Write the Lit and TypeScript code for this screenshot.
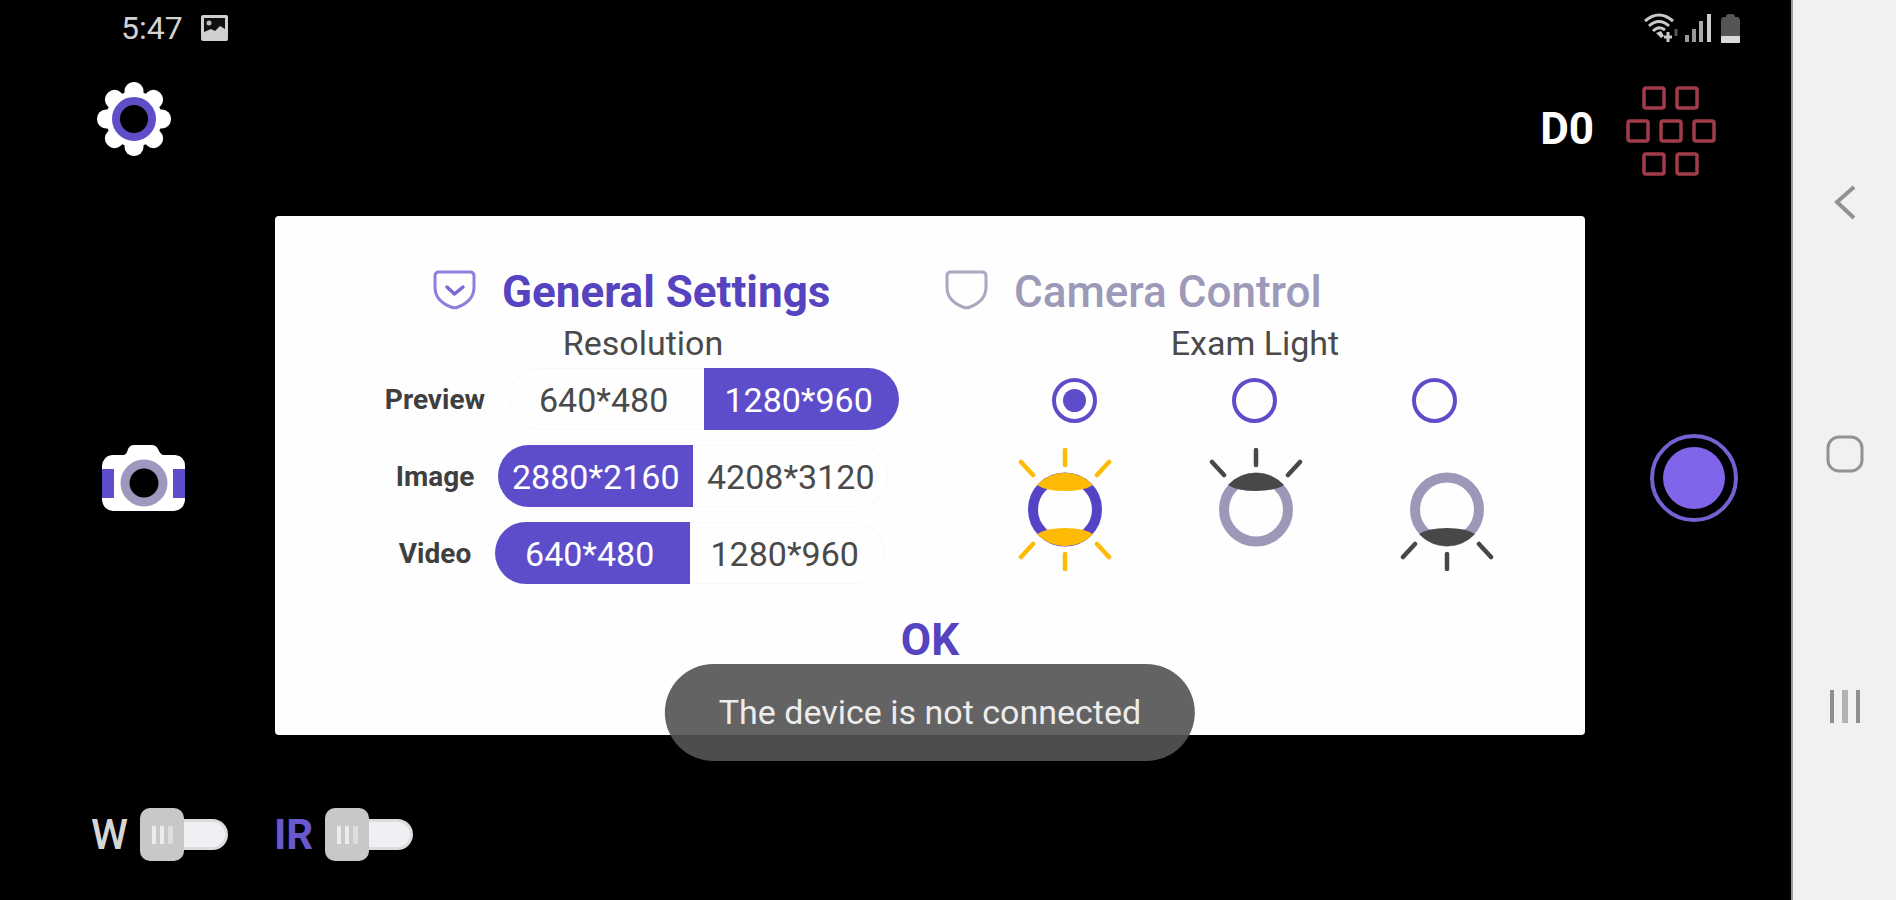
import { LitElement, html, css, svg } from "lit";
import { customElement, state } from "lit/decorators.js";
import { classMap } from "lit/directives/class-map.js";

interface ResolutionRow {
  id: string;
  label: string;
  options: string[];
  selected: number;
}

type Lamp = "both" | "top" | "bottom";

@customElement("app-root")
export class AppRoot extends LitElement {
  @state() private rows: ResolutionRow[] = [
    { id: "preview", label: "Preview", options: ["640*480", "1280*960"], selected: 1 },
    { id: "image", label: "Image", options: ["2880*2160", "4208*3120"], selected: 0 },
    { id: "video", label: "Video", options: ["640*480", "1280*960"], selected: 0 },
  ];
  @state() private light: Lamp = "both";
  @state() private tab = 0;

  static styles = css`
    :host {
      display: flex;
      min-height: 100vh;
      background: #000;
      font-family: Roboto, "Liberation Sans", sans-serif;
      color: #4a4a4a;
    }
    *,
    *::before,
    *::after {
      box-sizing: border-box;
    }
    svg {
      display: block;
      flex: none;
    }
    button {
      margin: 0;
      padding: 0;
      border: 0;
      background: none;
      font: inherit;
      color: inherit;
      cursor: pointer;
    }
    .stage {
      flex: 1;
      min-width: 0;
      display: grid;
      grid-template-columns: 275px 1fr 206px;
      grid-template-rows: 56px 160px 1fr 165px;
    }
    .status {
      grid-column: 1 / -1;
      display: flex;
      justify-content: space-between;
      align-items: center;
      padding: 0 47px 0 121px;
      font-size: 32px;
      line-height: 40px;
      color: #d2d2d2;
    }
    .status-group {
      display: flex;
      align-items: center;
      gap: 18px;
    }
    .status-icons {
      gap: 5px;
    }
    .top {
      grid-column: 1 / -1;
      display: flex;
      justify-content: space-between;
      align-items: flex-start;
      padding: 26px 75px 0 97px;
    }
    .detector {
      display: flex;
      align-items: flex-start;
      gap: 32px;
      padding-top: 4px;
      font-size: 44px;
      line-height: 86px;
      font-weight: 700;
      color: #fff;
    }
    .side {
      display: flex;
      align-items: center;
      padding-top: 4px;
    }
    .side-left {
      padding-left: 102px;
    }
    .side-right {
      padding-left: 64px;
    }
    .bottom {
      grid-column: 1 / -1;
      display: flex;
      align-items: flex-start;
      gap: 46px;
      padding: 73px 0 0 91px;
    }
    .switch {
      display: flex;
      align-items: center;
      gap: 12px;
      font-size: 42px;
      line-height: 52px;
      font-weight: 500;
      color: #d6d6d6;
    }
    .switch.violet {
      font-weight: 700;
      color: #6a58cf;
    }
    .switch input {
      appearance: none;
      display: flex;
      align-items: center;
      margin: 0;
      cursor: pointer;
    }
    .switch input::before {
      content: "";
      width: 44px;
      height: 53px;
      border-radius: 10px;
      background:
        linear-gradient(#ececec, #ececec) 12px 18px / 4px 18px no-repeat,
        linear-gradient(#ececec, #ececec) 20px 18px / 4px 18px no-repeat,
        linear-gradient(#dedede, #dedede) 28px 18px / 5px 18px no-repeat,
        #c8c8c8;
    }
    .switch input::after {
      content: "";
      width: 44px;
      height: 31px;
      border-radius: 0 16px 16px 0;
      border: 3px solid #dcdcdc;
      border-left: 0;
      background: #f0eff3;
    }
    .dialog {
      position: relative;
      display: flex;
      flex-direction: column;
      padding: 49px 0 64px;
      border-radius: 4px;
      background: #fefefe;
    }
    .tabs {
      display: grid;
      grid-template-columns: 512px auto;
      justify-content: start;
      padding-left: 158px;
    }
    .tab {
      display: flex;
      align-items: center;
      gap: 25px;
      font-size: 44px;
      line-height: 54px;
      font-weight: 500;
      white-space: nowrap;
      color: #9c99b9;
    }
    .tab.active {
      font-weight: 700;
      color: #5543c0;
    }
    .tab svg {
      margin-bottom: 4px;
    }
    .columns {
      display: grid;
      grid-template-columns: 1fr 1fr;
      padding: 0 25px 0 61px;
    }
    .title {
      margin: 0;
      padding-left: 2px;
      font-size: 34px;
      line-height: 49px;
      font-weight: 400;
      text-align: center;
    }
    .rows {
      display: grid;
      gap: 15px;
    }
    .row {
      display: flex;
      justify-content: center;
      align-items: center;
      gap: 24px;
    }
    .row-label {
      padding-top: 2px;
      font-size: 28px;
      line-height: 34px;
      font-weight: 700;
      color: #3f3f3f;
    }
    .segments {
      display: grid;
      grid-template-columns: 195px 195px;
      height: 62px;
      border-radius: 31px;
      box-shadow: inset 0 0 0 1px #f8f8f8;
      overflow: hidden;
    }
    .segment {
      position: relative;
      display: flex;
      align-items: center;
      justify-content: center;
      padding-top: 2px;
      font-size: 34px;
      line-height: 40px;
      cursor: pointer;
    }
    .segment.short {
      padding-right: 6px;
    }
    .segment.on {
      background: #5d4dcb;
      color: #fff;
    }
    .segment input {
      position: absolute;
      inset: 0;
      margin: 0;
      opacity: 0;
      cursor: pointer;
    }
    .radios {
      display: grid;
      grid-template-columns: repeat(3, 180px);
      justify-content: center;
      justify-items: center;
      align-items: center;
      height: 64px;
    }
    .radios input {
      appearance: none;
      display: grid;
      place-items: center;
      width: 45px;
      height: 45px;
      margin: 0;
      border: 4px solid #5d4dc8;
      border-radius: 50%;
      cursor: pointer;
    }
    .radios input:checked::before {
      content: "";
      width: 23px;
      height: 23px;
      border-radius: 50%;
      background: #5d4dcb;
    }
    .lamps {
      display: grid;
      grid-template-columns: repeat(3, 191px);
      justify-content: center;
      justify-items: center;
      padding: 16px 0 0 4px;
    }
    .ok {
      align-self: center;
      margin-top: 26px;
      font-size: 44px;
      line-height: 60px;
      font-weight: 700;
      color: #5543c0;
    }
    .toast {
      position: absolute;
      left: 50%;
      bottom: -26px;
      transform: translateX(-50%);
      padding: 0 54px;
      border-radius: 49px;
      background: rgba(84, 84, 84, 0.914);
      font-size: 34px;
      line-height: 97px;
      white-space: nowrap;
      color: #ececec;
    }
    .nav {
      flex: none;
      width: 105px;
      display: flex;
      flex-direction: column;
      align-items: center;
      justify-content: space-between;
      padding: 180px 0 172px;
      border-left: 2px solid #9a9a9a;
      background: #f1f1f1;
    }
    .nav button {
      padding: 4px;
    }
  `;

  private select(row: ResolutionRow, index: number) {
    this.rows = this.rows.map((r) => (r === row ? { ...r, selected: index } : r));
  }

  private shield(active: boolean) {
    return html`<svg width="44" height="40" viewBox="0 0 44 40" fill="none" stroke-linejoin="round" aria-hidden="true">
      <path
        d="M6 2H37Q41 2 41 6V17C41 28 33 34 25 37Q21.500 38.500 18 37C10 34 2 28 2 17V6Q2 2 6 2Z"
        stroke=${active ? "#8f7fdc" : "#aaa7c0"}
        stroke-width="3"
      />
      ${active ? svg`<path d="M14 17L21.500 24L30 17" stroke="#7a68d4" stroke-width="3.500" stroke-linecap="round"/>` : ""}
    </svg>`;
  }

  private lamp(kind: Lamp) {
    const lit = kind === "both";
    const tint = lit ? "#fdbb05" : "#484848";
    const cap = svg`
      <path d="M19 37A38 38 0 0 1 75 37Q66 43 47 43T19 37Z" fill=${tint}/>
      <path d="M47 2V17M3 14L15 27M91 14L79 27" stroke=${tint} stroke-width="4.500" stroke-linecap="round"/>`;
    return html`<svg width="94" height="123" viewBox="0 0 94 123" fill="none" aria-hidden="true">
      <circle cx="47" cy="61.500" r="32" stroke=${lit ? "#5543c6" : "#9b99b7"} stroke-width="10" />
      ${kind !== "bottom" ? cap : ""}
      ${kind !== "top" ? svg`<g transform="matrix(1 0 0 -1 0 123)">${cap}</g>` : ""}
    </svg>`;
  }

  private gear() {
    const teeth = [0, 45, 90, 135, 180, 225, 270, 315];
    return html`<svg width="74" height="74" viewBox="0 0 74 74" aria-hidden="true">
      <circle cx="37" cy="37" r="28" fill="#fff" />
      ${teeth.map((a) => svg`<rect x="27.500" y="0" width="19" height="22" rx="9" fill="#fff" transform="rotate(${a} 37 37)"/>`)}
      <circle cx="37" cy="37" r="18" fill="#000" stroke="#5f4fc6" stroke-width="8" />
    </svg>`;
  }

  private detectorGrid() {
    const cells = [
      [18, 2], [51, 2],
      [2, 35], [35, 35], [68, 35],
      [18, 68], [51, 68],
    ];
    return html`<svg width="90" height="90" viewBox="0 0 90 90" fill="none" aria-hidden="true">
      ${cells.map(([x, y]) => svg`<rect x=${x} y=${y} width="20" height="20" rx="2" stroke="#a33c4a" stroke-width="3.500"/>`)}
    </svg>`;
  }

  private renderStatus() {
    return html`<header class="status">
      <div class="status-group">
        <span>5:47</span>
        <svg width="27" height="26" viewBox="0 0 27 26" aria-hidden="true">
          <rect width="27" height="26" rx="2" fill="#cfcfcf" />
          <path d="M3 3H24V14L19 11L14 16L10 14L3 17Z" fill="#111" />
          <circle cx="8" cy="8" r="2.500" fill="#bbb" />
        </svg>
      </div>
      <div class="status-group status-icons">
        <svg width="37" height="30" viewBox="0 0 37 30" fill="none" stroke="#c9c9c9" aria-hidden="true">
          <path d="M2 8Q16 -4 30 8" stroke-width="3" />
          <path d="M6 13Q16 4 26 13" stroke-width="3" />
          <path d="M10 18Q16 12 22 17" stroke-width="3" />
          <path d="M13 20L18 18L21 23L18 25Z" fill="#c9c9c9" stroke="none" />
          <path d="M25 19V29M21 24H29" stroke-width="3" />
          <path d="M33 16V23" stroke="#555" stroke-width="3" />
        </svg>
        <svg width="27" height="28" viewBox="0 0 27 28" aria-hidden="true">
          <rect x="0" y="21" width="4" height="7" fill="#999" />
          <rect x="7" y="15" width="4" height="13" fill="#999" />
          <rect x="14" y="7" width="4" height="21" fill="#aaa" />
          <rect x="22" y="0" width="4" height="28" fill="#ccc" />
        </svg>
        <svg width="27" height="29" viewBox="0 0 27 29" aria-hidden="true">
          <path d="M9 3Q9 0 12 0H15Q18 0 18 3H20Q23 3 23 7V29H4V7Q4 3 7 3Z" fill="#555" />
          <rect x="4" y="22" width="19" height="7" rx="1" fill="#dadada" />
        </svg>
      </div>
    </header>`;
  }

  private renderRow(row: ResolutionRow) {
    return html`<div class="row" role="radiogroup" aria-labelledby="${row.id}-label">
      <span class="row-label" id="${row.id}-label">${row.label}</span>
      <div class="segments">
        ${row.options.map(
          (option, i) => html`<label
            class=${classMap({ segment: true, on: row.selected === i, short: option.length < 9 })}
          >
            <input type="radio" name=${row.id} .checked=${row.selected === i} @change=${() => this.select(row, i)} />
            <span>${option}</span>
          </label>`
        )}
      </div>
    </div>`;
  }

  private renderDialog() {
    const lamps: Lamp[] = ["both", "top", "bottom"];
    return html`<section class="dialog" role="dialog">
      <div class="tabs" role="tablist">
        ${["General Settings", "Camera Control"].map(
          (name, i) => html`<button
            class=${classMap({ tab: true, active: this.tab === i })}
            role="tab"
            aria-selected=${this.tab === i}
            @click=${() => (this.tab = i)}
          >
            ${this.shield(this.tab === i)}<span>${name}</span>
          </button>`
        )}
      </div>
      <div class="columns">
        <div>
          <h2 class="title">Resolution</h2>
          <div class="rows">${this.rows.map((row) => this.renderRow(row))}</div>
        </div>
        <div>
          <h2 class="title">Exam Light</h2>
          <div class="radios">
            ${lamps.map(
              (l) => html`<input
                type="radio"
                name="light"
                id="light-${l}"
                .checked=${this.light === l}
                @change=${() => (this.light = l)}
              />`
            )}
          </div>
          <div class="lamps">
            ${lamps.map((l) => html`<label for="light-${l}" aria-label=${l}>${this.lamp(l)}</label>`)}
          </div>
        </div>
      </div>
      <button class="ok">OK</button>
      <div class="toast" role="status">The device is not connected</div>
    </section>`;
  }

  render() {
    return html`
      <main class="stage">
        ${this.renderStatus()}
        <div class="top">
          <button aria-label="Settings">${this.gear()}</button>
          <div class="detector"><span>D0</span>${this.detectorGrid()}</div>
        </div>
        <div class="side side-left">
          <button aria-label="Take photo">
            <svg width="84" height="66" viewBox="0 0 84 66" aria-hidden="true">
              <path
                d="M10 10H22Q25 9 26 4Q28 0 32 0H50Q54 0 56 4Q58 9 61 10H73Q83 11 83 21V55Q82 65 72 66H11Q1 65 0 55V21Q1 11 10 10Z"
                fill="#fff"
              />
              <rect x="0" y="24" width="12" height="29" fill="#5d4dcb" />
              <rect x="71" y="24" width="12" height="29" fill="#5d4dcb" />
              <circle cx="42" cy="38" r="19" fill="#000" stroke="#9d98bd" stroke-width="9" />
            </svg>
          </button>
        </div>
        ${this.renderDialog()}
        <div class="side side-right">
          <button aria-label="Record">
            <svg width="90" height="90" viewBox="0 0 90 90" aria-hidden="true">
              <circle cx="45" cy="45" r="42" fill="none" stroke="#7660d2" stroke-width="4" />
              <circle cx="45" cy="45" r="31" fill="#8064ea" />
            </svg>
          </button>
        </div>
        <div class="bottom">
          <label class="switch">W<input type="checkbox" role="switch" /></label>
          <label class="switch violet">IR<input type="checkbox" role="switch" /></label>
        </div>
      </main>
      <nav class="nav">
        <button aria-label="Back">
          <svg width="36" height="36" viewBox="0 0 36 36" fill="none" aria-hidden="true">
            <path d="M27 3L10 18L27 34" stroke="#929292" stroke-width="4" />
          </svg>
        </button>
        <button aria-label="Home">
          <svg width="38" height="38" viewBox="0 0 38 38" fill="none" aria-hidden="true">
            <rect x="2" y="2" width="34" height="34" rx="11" stroke="#929292" stroke-width="3" />
          </svg>
        </button>
        <button aria-label="Recent apps">
          <svg width="36" height="36" viewBox="0 0 36 36" aria-hidden="true">
            <rect x="3" y="2" width="4" height="33" fill="#8f8f8f" />
            <rect x="15" y="2" width="6" height="33" fill="#b2b2b2" />
            <rect x="29" y="2" width="4" height="33" fill="#8f8f8f" />
          </svg>
        </button>
      </nav>
    `;
  }
}
